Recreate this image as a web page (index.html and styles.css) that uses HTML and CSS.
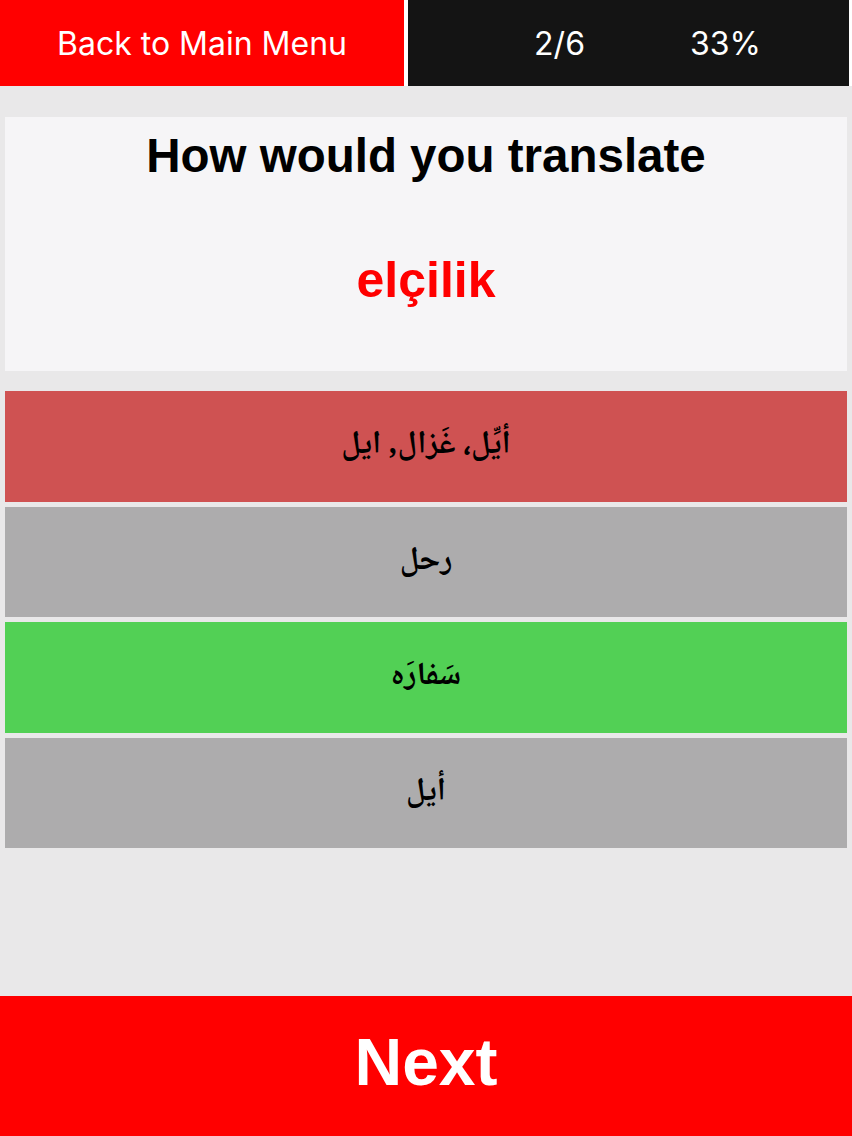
FILE: index.html
```html
<!DOCTYPE html>
<html lang="en">
<head>
<meta charset="utf-8">
<title>Quiz</title>
<link rel="stylesheet" href="styles.css">
</head>
<body>
<div class="screen">
  <header class="topbar">
    <div class="back">Back to Main Menu</div>
    <div class="stats">
      <span class="count">2/6</span>
      <span class="percent">33%</span>
    </div>
  </header>
  <main class="content">
    <section class="question">
      <div class="prompt">How would you translate</div>
      <div class="word">elçilik</div>
    </section>
    <div class="options">
      <div class="option wrong" dir="rtl">أيِّل، غَزال,  ايل</div>
      <div class="option neutral" dir="rtl">رحل</div>
      <div class="option right" dir="rtl">سَفارَه</div>
      <div class="option neutral" dir="rtl">أيل</div>
    </div>
  </main>
  <footer class="next">Next</footer>
</div>
</body>
</html>
```

FILE: styles.css
```css
html, body {
  margin: 0;
  padding: 0;
}
body {
  background: #e9e8e9;
  font-family: "Liberation Sans", Arial, sans-serif;
}
.screen {
  display: flex;
  flex-direction: column;
  height: 1136px;
}
.topbar {
  display: flex;
  height: 86px;
  background: #ffffff;
  gap: 4px;
  padding-right: 3px;
  font-family: Inter, "Liberation Sans", sans-serif;
}
.back {
  width: 404px;
  background: #ff0000;
  color: #fff;
  font-size: 32px;
  display: flex;
  align-items: center;
  justify-content: center;
}
.stats {
  flex: 1;
  background: #141414;
  color: #fff;
  font-size: 32px;
  display: flex;
  align-items: center;
  justify-content: center;
  gap: 105px;
  padding-left: 38px;
}
.content {
  flex: 1;
  padding: 31px 5px 0;
  display: flex;
  flex-direction: column;
  gap: 20px;
}
.question {
  background: #f6f5f7;
  height: 254px;
  display: flex;
  flex-direction: column;
  align-items: center;
}
.prompt {
  font-weight: bold;
  font-size: 47.5px;
  line-height: 1.15;
  margin-top: 12px;
  color: #000;
}
.word {
  font-weight: bold;
  font-size: 50px;
  line-height: 1.15;
  color: #ff0000;
  margin-top: 68px;
}
.options {
  display: flex;
  flex-direction: column;
  gap: 5px;
}
.option {
  height: 110.5px;
  display: flex;
  align-items: center;
  justify-content: center;
  font-family: "Noto Naskh Arabic", "Noto Sans Arabic", "DejaVu Sans", sans-serif;
  font-weight: bold;
  font-size: 32px;
  color: #000;
}
.wrong { background: #cf5252; }
.neutral { background: #adacad; }
.right { background: #52d055; }
.next {
  height: 140px;
  box-sizing: border-box;
  padding-bottom: 8px;
  background: #ff0000;
  color: #fff;
  font-weight: bold;
  font-size: 66px;
  display: flex;
  align-items: center;
  justify-content: center;
}
```
